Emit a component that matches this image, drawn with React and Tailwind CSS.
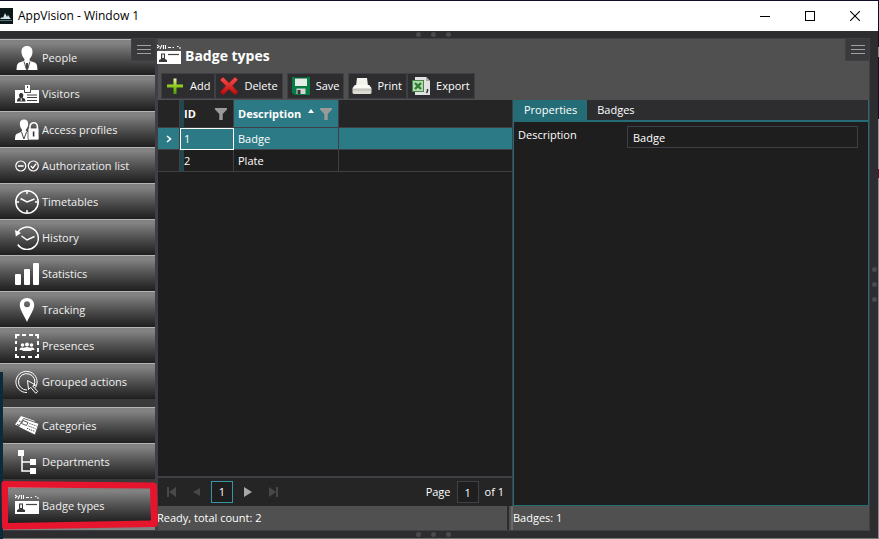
import React, { useState } from "react";

/* ---------- sidebar icons, drawn on a 24 x 24 grid ---------- */

function Icon({ children }) {
  return (
    <svg viewBox="0 0 24 24" className="size-6 shrink-0" fill="white" stroke="none" aria-hidden="true">
      {children}
    </svg>
  );
}

const PeopleIcon = () => (
  <Icon>
    <path d="M12 0c3.600 0 5.700 2.400 5.500 6-.2 3-1.300 5.400-2.900 6.700v1.800c1.400 1.200 4.200 1.500 5.900 2.400 1.500.8 1.800 3.100 2 7.100h-21c.2-4 .5-6.300 2-7.100 1.700-.9 4.500-1.200 5.900-2.400v-1.800C7.800 11.400 6.700 9 6.500 6 6.300 2.400 8.400 0 12 0z" />
    <path d="M9 15.500l2.600 8.500M15 15.500L12.400 24" stroke="#555" strokeWidth="1" fill="none" />
    <path d="M11 17h2l.4 4.500L12 24l-1.400-2.500z" fill="#444" />
  </Icon>
);

const VisitorsIcon = () => (
  <Icon>
    <path d="M10 3h5v5h9v13H0V8h10z" />
    <path d="M9.500 8v2.500h6V8M12.500 4v2" stroke="#444" strokeWidth="1" fill="none" />
    <path d="M12 13h10M12 15.500h10M12 18.500h10" stroke="#3c3c3c" strokeWidth="1" />
    <path d="M2 19.500c0-2.500 1-3.200 2.800-3.700C3.500 13.500 4 11 6.200 11s2.700 2.500 1.400 4.800c1.800.5 2.900 1.200 2.900 3.700z" fill="#333" />
    <path d="M6.200 16v3" stroke="white" strokeWidth="1" />
  </Icon>
);

const AccessIcon = () => (
  <Icon>
    <path d="M9 1.500c2.900 0 4.300 2 4.100 4.800-.1 2.300-1 4.100-2.200 5.200v1.500l2.600 1.500V22H0c.1-4 .5-5.500 2-6.200 1.700-.8 4.100-1.400 5-2.800v-1.500C5.900 10.400 5 8.600 4.900 6.300 4.700 3.500 6.100 1.500 9 1.500z" />
    <path d="M6.500 14l2.400 7 2.600-7" fill="none" stroke="#444" strokeWidth="1" />
    <rect x="13" y="10" width="11" height="12" rx="1" stroke="#444" strokeWidth=".8" />
    <path d="M15 11V8.500a3.700 3.700 0 017.400 0V11" fill="none" stroke="white" strokeWidth="1.600" />
    <path d="M18.600 13.500v5" stroke="#333" strokeWidth="1.600" />
  </Icon>
);

const AuthorizationIcon = () => (
  <Icon>
    <g fill="none" stroke="white" strokeWidth="1.200">
      <circle cx="5.800" cy="12" r="5" />
      <path d="M3 12h5.600" strokeWidth="1.600" />
      <circle cx="18.300" cy="12" r="5" />
      <path d="M15.800 12l2 2.200 3.200-4.400" strokeWidth="1.400" />
    </g>
  </Icon>
);

const TimetablesIcon = () => (
  <Icon>
    <g fill="none" stroke="white" strokeWidth="1.500">
      <circle cx="12" cy="12" r="11.200" />
      <path d="M5.500 8.500L12 12l7.500-3M12 1v3M12 20v3M1 12h3M20 12h3" />
    </g>
  </Icon>
);

const HistoryIcon = () => (
  <Icon>
    <g fill="none" stroke="white" strokeWidth="1.500">
      <path d="M2 7.500A11.200 11.200 0 112.800 18.500M6.500 10l5.500 4 7.500-3.500" />
    </g>
    <path d="M0 4l.8 6.500L6 7z" />
  </Icon>
);

const StatisticsIcon = () => (
  <Icon>
    <rect x="0" y="12" width="6" height="11" rx="1" />
    <rect x="9" y="7" width="6" height="16" rx="1" />
    <rect x="18" y="1" width="6" height="22" rx="1" />
  </Icon>
);

const TrackingIcon = () => (
  <Icon>
    <path fillRule="evenodd" d="M12 0c4.200 0 7.200 3 7.200 7 0 5-4 9.500-7.200 17C8.800 16.500 4.800 12 4.800 7c0-4 3-7 7.200-7zm0 3.300a3 3 0 100 6 3 3 0 000-6z" />
  </Icon>
);

const PresencesIcon = () => (
  <Icon>
    <path
      d="M1 4.500V1h3.500M7 1h4M14 1h4M20 1h3v3.500M23 7v4M23 14v4M23 20v3h-3M17 23h-4M10 23H6M4 23H1v-3M1 17v-4M1 10V7"
      fill="none"
      stroke="white"
      strokeWidth="2"
    />
    <circle cx="7.500" cy="11" r="1.800" />
    <circle cx="12" cy="10.500" r="2" />
    <circle cx="16.500" cy="11" r="1.800" />
    <path d="M4.500 16c0-2 1.500-2.500 3-2.500l1.200.3L12 13l3.300.8 1.200-.3c1.500 0 3 .5 3 2.500h-3v1h-9v-1z" />
  </Icon>
);

const GroupedIcon = () => (
  <Icon>
    <g fill="none" stroke="white" strokeWidth="1">
      <path d="M12 22.500A10.600 10.600 0 1120.500 17.500" />
      <path d="M12 20A8.200 8.200 0 1119 15.500" />
      <path d="M12.500 10.500l1 9 2.200-2.200 5 6 2-1.800-5-5.500 3-.8z" />
    </g>
  </Icon>
);

const CategoriesIcon = () => (
  <Icon>
    <path d="M6 2l14 5-5 10L0 10.500z" />
    <path d="M8.500 4.500L24 9.500l-4 11.500L3.500 13z" stroke="#444" strokeWidth=".8" />
    <path d="M8 6.500l5 2-1.500 3-5-2z" fill="none" stroke="#444" strokeWidth=".9" />
    <path d="M2 10.500l2.500 1M4 7l1.500.6" stroke="#444" strokeWidth="1" />
    <path d="M14.500 9.500l7 2.500M13.500 12l7 2.700M12 14.300l7.500 3" stroke="#444" strokeWidth="1" strokeDasharray="1.200 1" />
  </Icon>
);

const DepartmentsIcon = () => (
  <Icon>
    <rect x="3" y="0" width="6" height="6" />
    <rect x="15" y="9" width="6" height="6" />
    <rect x="15" y="18" width="6" height="6" />
    <path d="M7 5v16h9M7 12h9" fill="none" stroke="white" strokeWidth="1.500" />
  </Icon>
);

const BadgeIcon = () => (
  <Icon>
    <path d="M0 1l2 1.500L0 4M3 5l2-4M6.500 1v4M8.500 1v4" fill="none" stroke="white" strokeWidth="1.100" />
    <path d="M11 3.500h3M15.500 3.500h1.500M20 2.500h1.500M22 4h2" stroke="white" strokeWidth="1.100" />
    <rect x="0" y="7" width="24" height="13" />
    <path d="M11 10.500h11" stroke="#444" strokeWidth="1.200" />
    <path d="M2 18v-2l2-1V9.500h4V15l2 1v2z" fill="#3a3a3a" />
    <path d="M5.200 10.500h1.700v3.500H5.200z" fill="white" />
  </Icon>
);

/* ---------- toolbar icons ---------- */

const AddIcon = () => (
  <svg viewBox="0 0 20 20" className="size-5 shrink-0" aria-hidden="true">
    <defs>
      <linearGradient id="plus" x1="0" y1="0" x2="0" y2="1">
        <stop offset="0" stopColor="#e4f7b0" />
        <stop offset=".5" stopColor="#8cc919" />
        <stop offset="1" stopColor="#4c9a08" />
      </linearGradient>
    </defs>
    <path d="M8.500 2.500h3v6H18v3h-6.500V18h-3v-6.500H2v-3h6.500z" fill="url(#plus)" />
  </svg>
);

const DeleteIcon = () => (
  <svg viewBox="0 0 20 20" className="size-5 shrink-0" aria-hidden="true">
    <defs>
      <linearGradient id="cross" x1="0" y1="0" x2="0" y2="1">
        <stop offset="0" stopColor="#f5534e" />
        <stop offset="1" stopColor="#b80808" />
      </linearGradient>
    </defs>
    <path
      d="M4 1l6 5.800L16 1l3 2.700-5.500 6.100L19 16l-2.800 3L10 13.300 4.300 19 1 16.200l5.700-6.300L1 4z"
      fill="url(#cross)"
      stroke="#8d1014"
      strokeWidth=".6"
    />
  </svg>
);

const SaveIcon = () => (
  <svg viewBox="0 0 20 20" className="size-5 shrink-0" aria-hidden="true">
    <path d="M1 1h18v18H4l-3-2z" fill="#067c45" />
    <path d="M4 1h12v9H4z" fill="#e5ece8" />
    <path d="M4 1h12v1.500H4z" fill="#0a5c35" />
    <path d="M5.500 12.500h9V18h-9z" fill="#d4d4d4" />
    <path d="M6.500 14h3v4h-3z" fill="#333" />
  </svg>
);

const PrintIcon = () => (
  <svg viewBox="0 0 20 20" className="size-5 shrink-0" aria-hidden="true">
    <path d="M5 2h10l1 8H4z" fill="#f4f4ee" />
    <path d="M3 9h14l2.500 3v5l-1 1h-17l-1-1v-5z" fill="#dcdcd4" />
    <path d="M3 9h14l2 3H1z" fill="#fafaf6" />
    <path d="M1 14h18" stroke="#b4b4ac" strokeWidth="1" />
  </svg>
);

const ExportIcon = () => (
  <svg viewBox="0 0 20 20" className="size-5 shrink-0" aria-hidden="true">
    <path d="M4 1h11l4 4v14H4z" fill="#e2e2e2" />
    <path d="M15 1l4 4h-4z" fill="#aaa" />
    <path d="M16.500 13v2l-1 2" stroke="#333" strokeWidth="1.500" fill="none" />
    <rect x="1" y="4" width="12" height="12" fill="#3d8b40" />
    <rect x="2" y="5" width="10" height="10" fill="#b9d8b5" />
    <path d="M4 7l6 6M10 7l-6 6" stroke="#2f7d32" strokeWidth="2.400" />
  </svg>
);

/* ---------- small shared parts ---------- */

const FilterIcon = () => (
  <svg viewBox="0 0 12 12" className="size-3 shrink-0" aria-hidden="true">
    <path d="M0 0h12v1.500L7.700 6v6H4.300V6L0 1.500z" fill="#9a9a9a" />
  </svg>
);

function MenuButton({ label }) {
  return (
    <button
      type="button"
      aria-label={label}
      className="flex h-[22px] w-6 flex-col items-center justify-center gap-[3px] border-b border-l border-[#3f3f46] bg-[#3a3a3d]"
    >
      <span className="h-px w-[14px] bg-[#a0a0a0]" />
      <span className="h-px w-[14px] bg-[#a0a0a0]" />
      <span className="h-px w-[14px] bg-[#a0a0a0]" />
    </button>
  );
}

function Grip({ vertical }) {
  return (
    <div className={vertical ? "flex flex-col gap-[10px]" : "flex gap-[10px]"}>
      <span className="size-[5px] rounded-full bg-[#4a4a4d]" />
      <span className="size-[5px] rounded-full bg-[#4a4a4d]" />
      <span className="size-[5px] rounded-full bg-[#4a4a4d]" />
    </div>
  );
}

function SideButton({ icon: Glyph, label }) {
  return (
    <button
      type="button"
      className="flex h-9 w-full shrink-0 items-center gap-[3px] border-t border-[#b4b4b4] bg-linear-to-b from-[#828282] from-10% via-[#4c4c4c] via-55% to-[#1f1f1f] pl-[15px] text-left text-[#f0f0f0]"
    >
      <Glyph />
      <span className="whitespace-nowrap">{label}</span>
    </button>
  );
}

function ToolButton({ icon: Glyph, label }) {
  return (
    <button
      type="button"
      className="flex h-[26px] items-center gap-[5px] border border-[#3f3f46] bg-[#2d2d30] pr-1 pl-[3px] text-white"
    >
      <Glyph />
      {label}
    </button>
  );
}

function PagerButton({ label, path, active }) {
  return (
    <button type="button" aria-label={label} className="flex h-[22px] w-[25px] items-center justify-center">
      <svg viewBox="0 0 10 10" className="size-[10px]" fill={active ? "#a8a8a8" : "#48484b"} aria-hidden="true">
        <path d={path} />
      </svg>
    </button>
  );
}

const groups = [
  [
    ["People", PeopleIcon],
    ["Visitors", VisitorsIcon],
    ["Access profiles", AccessIcon],
    ["Authorization list", AuthorizationIcon],
    ["Timetables", TimetablesIcon],
    ["History", HistoryIcon],
    ["Statistics", StatisticsIcon],
    ["Tracking", TrackingIcon],
    ["Presences", PresencesIcon],
    ["Grouped actions", GroupedIcon],
  ],
  [
    ["Categories", CategoriesIcon],
    ["Departments", DepartmentsIcon],
  ],
  [["Badge types", BadgeIcon]],
];

function Sidebar() {
  return (
    <aside className="relative flex w-[155px] shrink-0 flex-col">
      <nav className="flex min-h-0 flex-1 flex-col gap-2 overflow-hidden bg-[#3a3a3a]">
        {groups.map((items, i) => (
          <div key={i} className="flex shrink-0 flex-col">
            {items.map(([label, glyph]) => (
              <SideButton key={label} label={label} icon={glyph} />
            ))}
            {i === 2 && <div className="h-2 border-t border-[#b4b4b4] bg-[#828282]" />}
          </div>
        ))}
      </nav>
      <div className="absolute top-0 right-0">
        <MenuButton label="Sidebar menu" />
      </div>
      {/* desktop showing past the window's lower left edge */}
      <div className="absolute top-[333px] -bottom-[9px] left-0 w-[3px] bg-[#0d2a38]" />
      {/* red marker round the current entry */}
      <svg viewBox="0 0 158 50" className="absolute top-[441px] left-0 z-10 h-[50px] w-[158px]" aria-hidden="true">
        <path
          fillRule="evenodd"
          fill="#e6142d"
          d="M4 1L154 2.500Q157 3 157 6L158 44Q158 47 154 47L5 49.500Q2 49.500 2 46L1.500 4Q1.500 1 4 1zM8 7.500L8 43L151 40.500L150 8.500z"
        />
      </svg>
    </aside>
  );
}

const th = "border-r border-b border-[#3f3f46] p-0 pl-1 text-left font-bold";
const td = "h-[22px] border-r border-b border-[#3f3f46] p-0 pl-1";

function BadgeGrid() {
  return (
    <section className="flex min-w-0 flex-1 flex-col border-r border-[#3f3f46] bg-[#1e1e1e]">
      <table className="w-full table-fixed border-separate border-spacing-0 text-white">
        <colgroup>
          <col className="w-[22px]" />
          <col className="w-[54px]" />
          <col className="w-[105px]" />
          <col />
        </colgroup>
        <thead>
          <tr className="h-7 bg-[#252526]">
            <th className={th} aria-label="Current row" />
            <th className="border-r border-b border-l-4 border-[#3f3f46] border-l-[#24474e] p-0 text-left font-bold">
              <div className="flex items-center justify-between pr-[6px]">
                ID <FilterIcon />
              </div>
            </th>
            <th className={th + " bg-[#2d7a87]"} aria-sort="ascending">
              <div className="flex items-center justify-between pr-[6px]">
                Description
                <svg viewBox="0 0 6 4" className="mb-[6px] h-1 w-[6px]" aria-hidden="true">
                  <path d="M3 0l3 4H0z" fill="white" />
                </svg>
                <FilterIcon />
              </div>
            </th>
            <th className="border-b border-[#3f3f46] p-0" aria-label="Empty" />
          </tr>
        </thead>
        <tbody>
          <tr className="bg-[#2d7a87]" aria-selected="true">
            <td className={td}>
              <svg viewBox="0 0 6 8" className="ml-1 h-2 w-[6px]" fill="none" stroke="white" strokeWidth="1.600" aria-hidden="true">
                <path d="M1 1l3.500 3L1 7" />
              </svg>
            </td>
            <td className="border border-white p-0 pl-[3px]">1</td>
            <td className={td}>Badge</td>
            <td className="border-b border-[#3f3f46] p-0" />
          </tr>
          <tr>
            <td className={td + " bg-[#252526]"} />
            <td className="border-r border-b border-l-4 border-[#3f3f46] border-l-[#24474e] p-0">2</td>
            <td className={td}>Plate</td>
            <td className="border-b border-[#3f3f46] p-0" />
          </tr>
        </tbody>
      </table>
      <div className="mt-auto flex h-[30px] items-center border-t-2 border-[#3f3f46] bg-[#252526] pr-2 pl-px text-white">
        <PagerButton label="First page" path="M0 0h2v10H0zM9 0v10L2 5z" />
        <PagerButton label="Previous page" path="M8 1v8L1 5z" />
        <button type="button" className="mx-[2px] size-[22px] border border-[#3597a6] bg-[#1e1e1e]">
          1
        </button>
        <PagerButton active label="Next page" path="M1 0v10l8-5z" />
        <PagerButton label="Last page" path="M8 0h2v10H8zM1 0v10l7-5z" />
        <label htmlFor="page" className="ml-auto">
          Page
        </label>
        <input
          id="page"
          defaultValue="1"
          className="mx-[6px] size-[22px] border border-[#3f3f46] bg-[#1e1e1e] text-center text-white outline-none"
        />
        of 1
      </div>
    </section>
  );
}

function Details() {
  const [tab, setTab] = useState("Properties");
  const on = "bg-[#256d76] px-[10px] text-white";
  const off = "px-[10px] text-white";
  return (
    <section className="flex min-w-0 flex-1 flex-col border-r border-b border-l border-[#256d76] bg-[#1e1e1e]">
      <div role="tablist" className="flex h-[22px] shrink-0 border-b-2 border-[#256d76] bg-[#2d2d30]">
        {["Properties", "Badges"].map((name) => (
          <button
            key={name}
            type="button"
            role="tab"
            aria-selected={tab === name}
            onClick={() => setTab(name)}
            className={tab === name ? on : off}
          >
            {name}
          </button>
        ))}
      </div>
      <div className="flex items-start pt-1 pr-[10px] pl-1 text-white">
        <label htmlFor="description" className="w-[109px] shrink-0 pt-px">
          Description
        </label>
        <input
          id="description"
          defaultValue="Badge"
          className="h-[22px] min-w-0 flex-1 border border-[#3f3f46] bg-[#1e1e1e] px-[5px] text-white outline-none"
        />
      </div>
    </section>
  );
}

export default function App() {
  return (
    <div className="flex h-screen flex-col overflow-hidden border-t border-[#130c28] bg-[#2d2d30] font-['Open_Sans','Noto_Sans',sans-serif] text-[11px] leading-4">
      <div className="flex min-h-0 flex-1">
        <div className="flex min-w-0 flex-1 flex-col">
          <header className="flex h-[30px] shrink-0 items-center bg-white text-black">
            <svg viewBox="0 0 13 16" className="h-4 w-[13px]" aria-hidden="true">
              <path d="M0 0h13v16H0z" fill="#0c1719" />
              <path d="M0 11l2-2 1 1 2-5 2 4 1-2 2 3 1 1z" fill="#d5e5e6" />
              <path d="M0 12.500h12" stroke="#52777a" strokeWidth="1" />
            </svg>
            <h1 className="ml-[5px] flex-1 text-xs">AppVision - Window 1</h1>
            <button type="button" aria-label="Minimize" className="flex h-full w-[46px] items-center justify-center">
              <span className="h-px w-[10px] bg-black" />
            </button>
            <button type="button" aria-label="Maximize" className="flex h-full w-11 items-center justify-center">
              <span className="size-[10px] border border-black" />
            </button>
            <button type="button" aria-label="Close" className="flex h-full w-[46px] items-center justify-center">
              <svg viewBox="0 0 10 10" className="size-[10px]" stroke="black" strokeWidth="1.100" aria-hidden="true">
                <path d="M0 0l10 10M10 0L0 10" />
              </svg>
            </button>
          </header>

          <div className="flex h-[7px] shrink-0 items-center justify-center pr-3">
            <Grip />
          </div>

          <div className="flex min-h-0 flex-1">
            <div className="flex min-w-0 flex-1 border-y border-r border-[#3f3f46]">
              <Sidebar />
              <div className="w-[3px] shrink-0 bg-[#3f3f46]" />
              <main className="flex min-w-0 flex-1 flex-col bg-[#505050]">
                <div className="flex h-[34px] shrink-0 justify-between">
                  <div className="-ml-px flex items-center gap-1 text-white">
                    <BadgeIcon />
                    <h2 className="text-sm font-bold">Badge types</h2>
                  </div>
                  <MenuButton label="Panel menu" />
                </div>
                <div className="flex h-[27px] shrink-0 items-start pl-[3px]">
                  <ToolButton icon={AddIcon} label="Add" />
                  <ToolButton icon={DeleteIcon} label="Delete" />
                  <div className="ml-1 flex">
                    <ToolButton icon={SaveIcon} label="Save" />
                  </div>
                  <div className="ml-1 flex">
                    <ToolButton icon={PrintIcon} label="Print" />
                    <ToolButton icon={ExportIcon} label="Export" />
                  </div>
                </div>
                <div className="flex min-h-0 flex-1">
                  <BadgeGrid />
                  <Details />
                </div>
                <footer className="-ml-px flex h-6 shrink-0 items-center text-white">
                  <div className="flex h-full flex-1 items-center">
                    <p className="flex-1">Ready, total count: 2</p>
                    <span className="mr-[2px] h-full w-[2px] bg-[#2d2d30]" />
                    <span className="h-full w-[2px] bg-[#6a6a6a]" />
                  </div>
                  <p className="flex-1">Badges: 1</p>
                </footer>
              </main>
            </div>
            <div className="flex w-2 shrink-0 items-center justify-center">
              <Grip vertical />
            </div>
          </div>

          <div className="flex h-[7px] shrink-0 items-center justify-center pr-3">
            <Grip />
          </div>
        </div>
        {/* desktop showing past the right edge */}
        <div className="flex w-px shrink-0 flex-col">
          <span className="h-[46px] bg-[#130c28]" />
          <span className="h-[10px] bg-[#8a8a8a]" />
          <span className="h-[62px] bg-[#130c28]" />
          <span className="h-[50px] bg-[#9a9a9a]" />
          <span className="h-[9px] bg-[#5c0f2e]" />
          <span className="flex-1 bg-[#8e8e8e]" />
        </div>
      </div>
      <div className="h-px shrink-0 bg-[#77777a]" />
    </div>
  );
}
